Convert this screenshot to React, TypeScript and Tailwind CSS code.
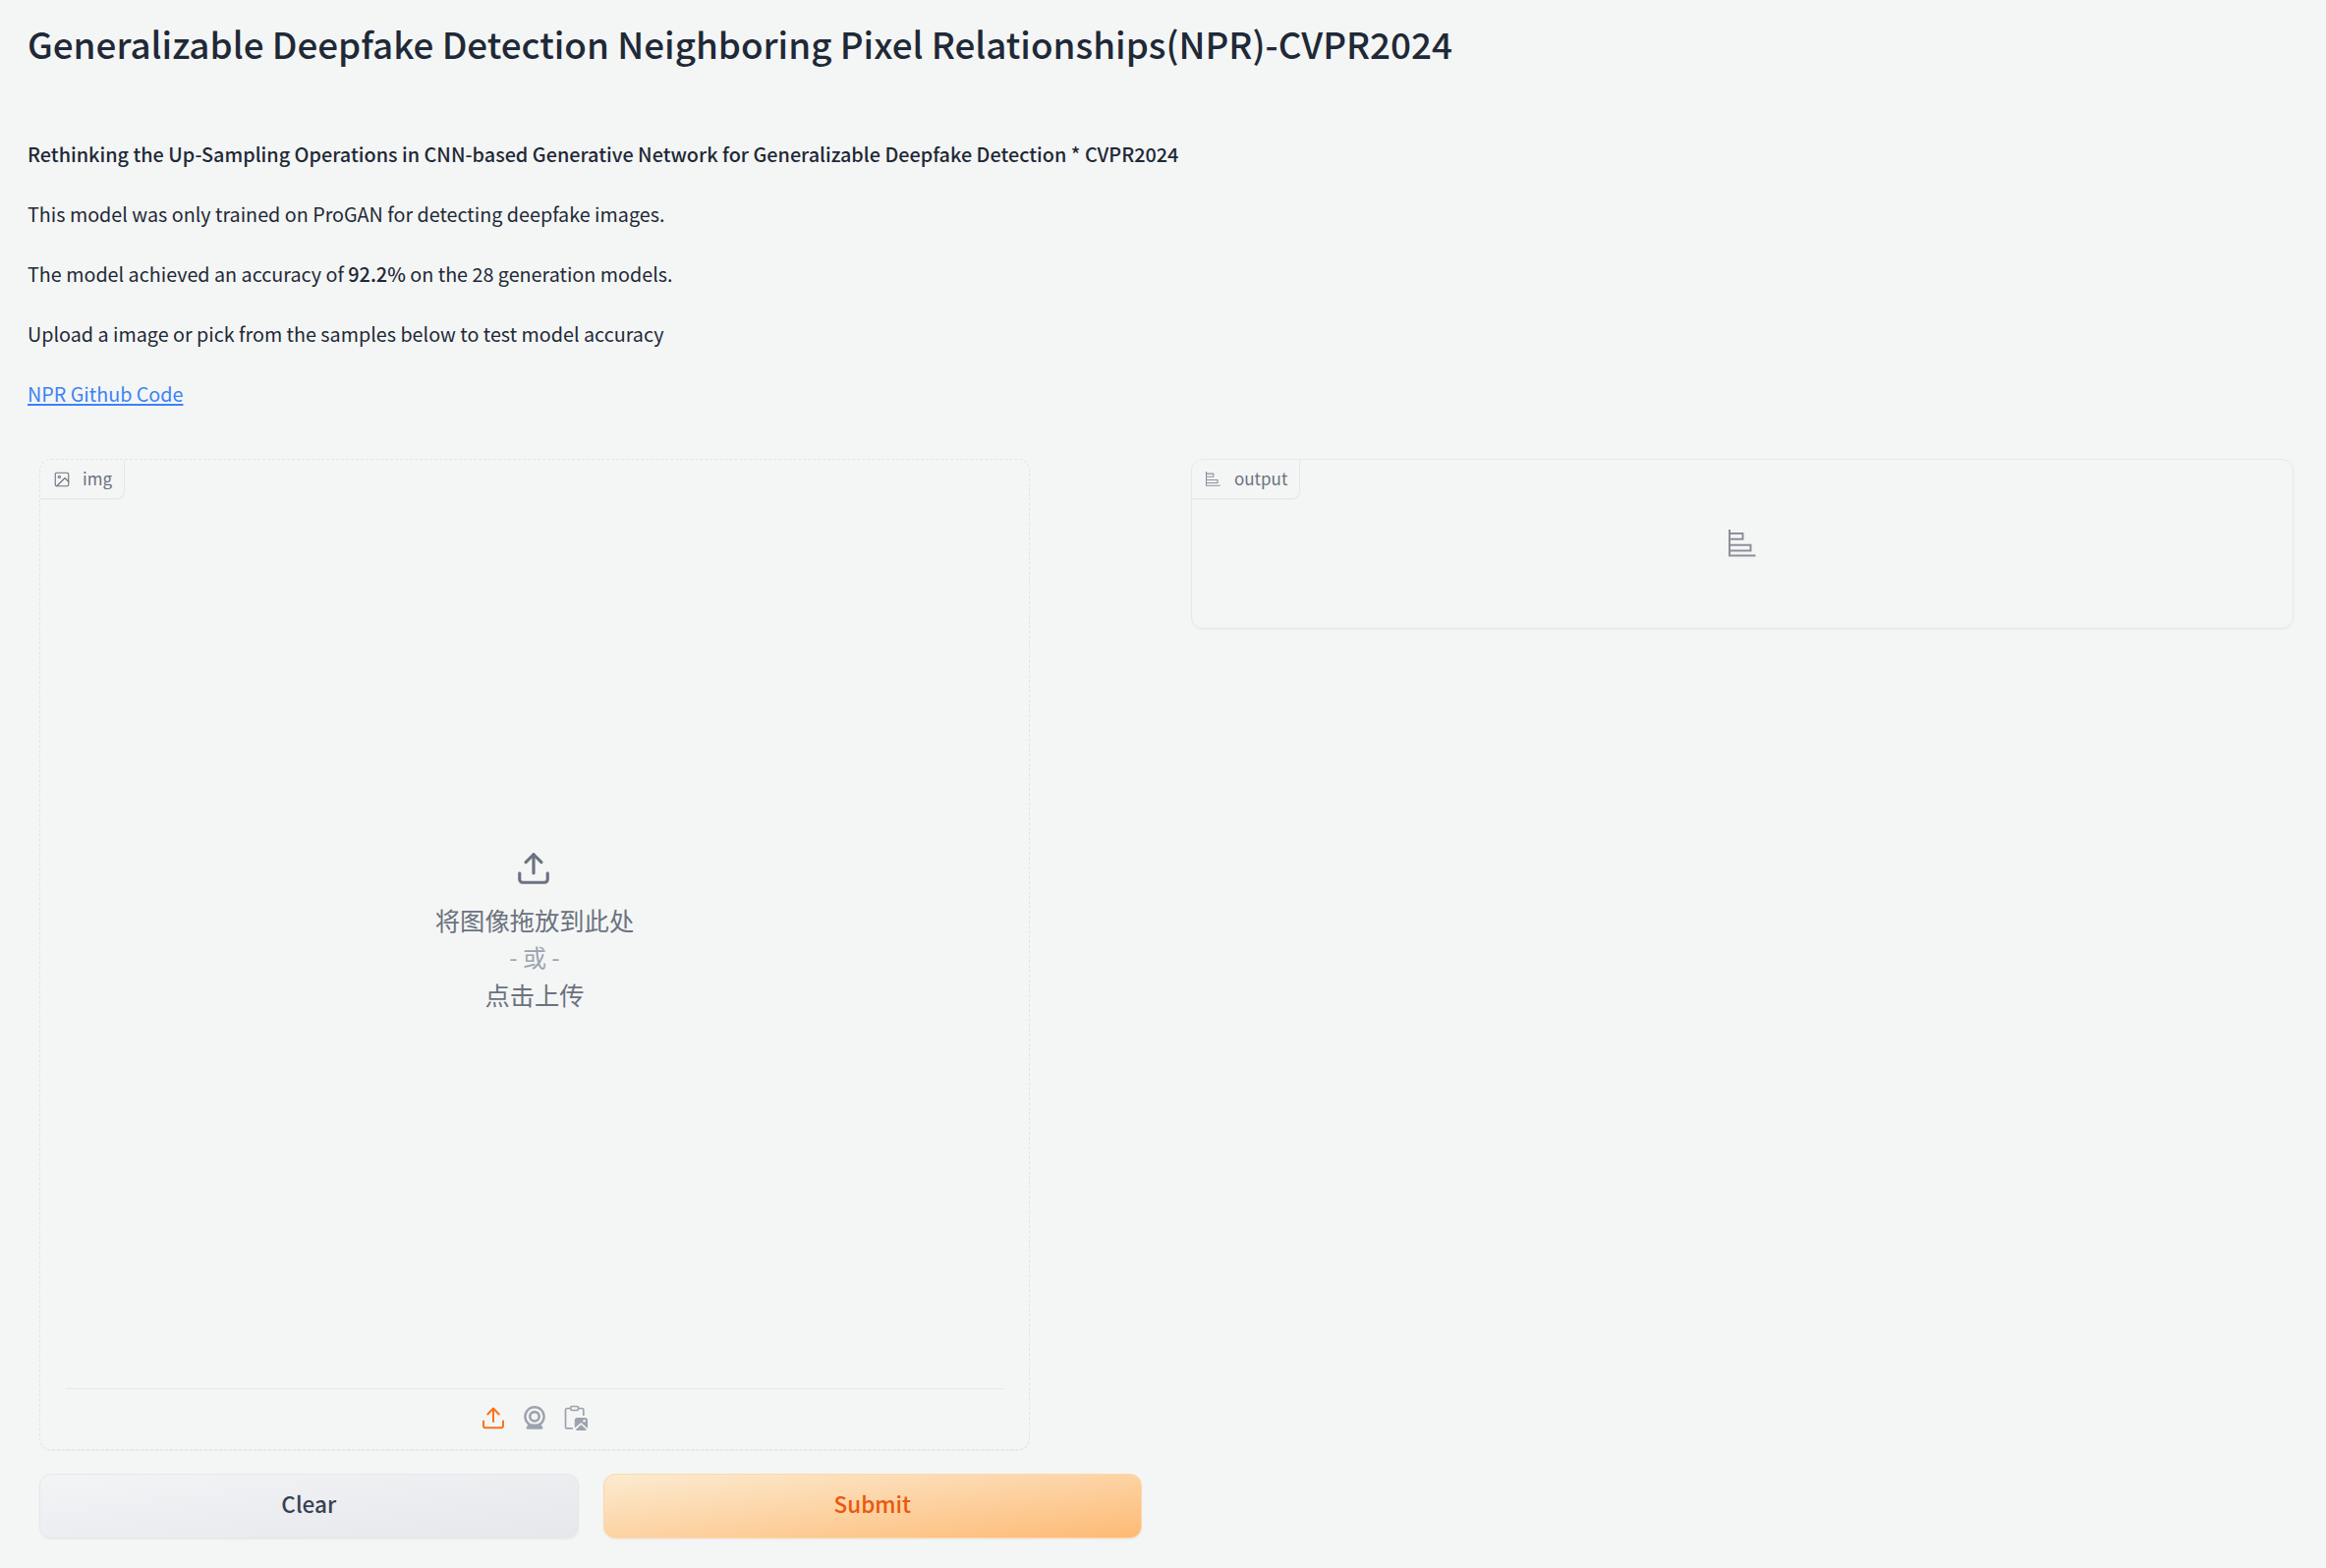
import React from "react";

function UploadIcon({ className, strokeWidth = 2 }: { className: string; strokeWidth?: number }) {
  return (
    <svg viewBox="0 0 24 24" fill="none" stroke="currentColor" strokeWidth={strokeWidth} strokeLinecap="round" strokeLinejoin="round" className={className}>
      <path d="M21 15v4a2 2 0 0 1-2 2H5a2 2 0 0 1-2-2v-4" />
      <polyline points="17 8 12 3 7 8" />
      <line x1="12" y1="3" x2="12" y2="15" />
    </svg>
  );
}

function SourceUploadIcon() {
  return (
    <svg viewBox="0 0 24 24" fill="none" stroke="currentColor" strokeWidth="2" strokeLinecap="round" strokeLinejoin="round" className="size-6 text-[#f97316]">
      <path d="M22 15.500v5a1.800 1.800 0 0 1-1.800 1.800H3.800A1.800 1.800 0 0 1 2 20.500v-5" />
      <path d="M6.300 8.500 12 2.500l5.700 6M12 3v13" />
    </svg>
  );
}

function WebcamIcon() {
  return (
    <svg viewBox="0 0 24 24" fill="none" stroke="currentColor" className="size-6">
      <circle cx="12" cy="10.800" r="9.600" strokeWidth="2.400" />
      <circle cx="12" cy="10.800" r="4.700" strokeWidth="2.600" />
      <path d="M6 18.500h12l2 2.800q1 2.500-1 2.500H5q-2 0-1-2.500Z" fill="currentColor" stroke="none" />
    </svg>
  );
}

function ClipboardImageIcon() {
  return (
    <svg viewBox="0 0 24 26" fill="none" stroke="currentColor" strokeWidth="1.700" className="h-[26px] w-6">
      <path d="M6.500 3.500H3.200A1.700 1.700 0 0 0 1.500 5.200v17A1.700 1.700 0 0 0 3.200 23.900H9M14.800 3.500h3.300a1.700 1.700 0 0 1 1.700 1.700V11" />
      <rect x="6.700" y="1.500" width="7.800" height="4" rx="1.600" />
      <path
        d="M13.500 13h7.800a2.700 2.700 0 0 1 2.700 2.700v8.300l-6.600-6-6.600 5.500v-7.800A2.700 2.700 0 0 1 13.500 13Z M17.400 20l5.600 5.200a2 2 0 0 1-1.500.8h-8.200a2.400 2.400 0 0 1-1.500-.8Z"
        fill="currentColor"
        stroke="none"
      />
      <circle cx="20.600" cy="16.200" r="1.300" fill="#f4f6f5" stroke="none" />
    </svg>
  );
}

function ImageIcon() {
  return (
    <svg viewBox="0 0 24 24" fill="none" stroke="currentColor" strokeWidth="1.500" strokeLinecap="round" strokeLinejoin="round" className="ml-px size-[18px]">
      <rect x="3" y="3" width="18" height="18" rx="2" />
      <circle cx="8.500" cy="8.500" r="1.500" />
      <path d="M21 15l-5-5L5 21" />
    </svg>
  );
}

function BarsIcon({ className }: { className: string }) {
  return (
    <svg viewBox="0 0 28 28" fill="none" stroke="currentColor" strokeWidth="2" className={className}>
      <path d="M1 0v26.500h26.500M1 3.900h13.500v5.900H1M1 15.700h21.500v5.900H1" />
    </svg>
  );
}

function BlockLabel({ icon, children }: { icon: React.ReactNode; children: React.ReactNode }) {
  return (
    <div className="flex h-10 w-fit items-center gap-3 rounded-br-lg border-r border-b border-[#e5e7eb] pr-[12px] pl-3 text-[17px] leading-[24px] text-[#6b7280] shadow-[0_1px_1px_rgba(0,0,0,0.03)]">
      {icon}
      <span className="-mt-[2px]">{children}</span>
    </div>
  );
}

export default function App() {
  return (
    <main className="h-[1596px] w-[2367px] overflow-hidden bg-[#f4f6f5] pt-[20px] font-['Noto_Sans_CJK_SC',sans-serif] text-[#1f2937]">
      <header className="px-7 text-[19.740px] leading-[30px]">
        <h1 className="text-[36.810px] leading-[48px] font-medium">
          Generalizable Deepfake Detection Neighboring Pixel Relationships(NPR)-CVPR2024
        </h1>
        <div className="mt-[74px] flex flex-col items-start gap-[31px]">
          <p className="text-[19.840px] font-medium">
            Rethinking the Up-Sampling Operations in CNN-based Generative Network for Generalizable Deepfake Detection * CVPR2024
          </p>
          <p>This model was only trained on ProGAN for detecting deepfake images.</p>
          <p>
            The model achieved an accuracy of <strong className="text-[19.900px] font-medium">92.2%</strong> on the 28 generation models.
          </p>
          <p>Upload a image or pick from the samples below to test model accuracy</p>
          <a className="text-[#3b82f6] underline decoration-2 underline-offset-[2px]">NPR Github Code</a>
        </div>
      </header>

      <div className="mt-[51px] flex items-start gap-[50px] pl-10">
        <section className="w-[1122px]">
          <div className="flex h-[1009px] w-[1008px] flex-col rounded-xl border border-dashed border-[#e5e1e5] shadow-[0_1px_1px_rgba(0,0,0,0.03)]">
            <BlockLabel icon={<ImageIcon />}>img</BlockLabel>
            <div className="flex flex-1 flex-col items-center pt-[357px] text-[25.300px] leading-[38px] text-[#6b7280]">
              <UploadIcon className="mr-[3px] mb-[14px] size-[38px]" />
              <span>将图像拖放到此处</span>
              <span className="text-[24px] text-[#9ca3af]">- 或 -</span>
              <span>点击上传</span>
            </div>
            <div className="mx-[26px] flex h-[62px] items-center justify-center gap-[18px] border-t border-[#e5e7eb] pb-[3px] text-[#9ca3af]">
              <SourceUploadIcon />
              <WebcamIcon />
              <ClipboardImageIcon />
            </div>
          </div>
          <div className="mt-6 flex gap-[25px] text-[22.500px] leading-[32px] font-medium">
            <button className="h-[66px] flex-1 rounded-xl border border-[#e5e7eb] bg-linear-to-br from-[#f3f4f6] to-[#e5e7eb] pb-[6px] text-[#374151] shadow-[0_1px_2px_rgba(0,0,0,0.05)]">
              Clear
            </button>
            <button className="h-[66px] flex-1 rounded-xl border border-[#fed7aa] bg-linear-to-br from-[#fbebd0] to-[#fdba74] pb-[6px] text-[#ea580c] shadow-[0_1px_2px_rgba(0,0,0,0.05)]">
              Submit
            </button>
          </div>
        </section>

        <section className="flex h-[173px] w-[1122px] flex-col rounded-xl border border-[#e5e7eb] shadow-[0_1px_1px_rgba(0,0,0,0.04)]">
          <BlockLabel icon={<BarsIcon className="mx-[2px] size-[15px] text-[#8d8f9c]" />}>output</BlockLabel>
          <div className="flex justify-center pt-[31px] text-[#8d8f9c]">
            <BarsIcon className="size-7" />
          </div>
        </section>
      </div>
    </main>
  );
}
